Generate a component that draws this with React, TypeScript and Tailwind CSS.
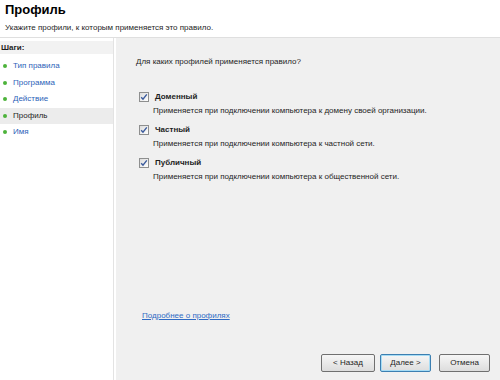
import React from 'react'

const steps = [
  { label: 'Тип правила', current: false },
  { label: 'Программа', current: false },
  { label: 'Действие', current: false },
  { label: 'Профиль', current: true },
  { label: 'Имя', current: false },
]

const profiles = [
  { name: 'Доменный', desc: 'Применяется при подключении компьютера к домену своей организации.' },
  { name: 'Частный', desc: 'Применяется при подключении компьютера к частной сети.' },
  { name: 'Публичный', desc: 'Применяется при подключении компьютера к общественной сети.' },
]

function Check() {
  return (
    <span className="w-[10px] h-[10px] border border-[#8e8f8f] bg-gradient-to-br from-[#dcdcdc] to-white flex items-center justify-center">
      <svg width="8" height="8" viewBox="0 0 8 8">
        <path d="M1.2 4.2 L3 6.2 L6.8 1.4" fill="none" stroke="#3a5a9c" strokeWidth="1.4" />
      </svg>
    </span>
  )
}

function Button({ label, focused, wide }: { label: string; focused?: boolean; wide?: boolean }) {
  return (
    <button
      className={`h-[18px] ${wide ? 'w-[54px]' : 'w-[51px]'} rounded-[2px] text-[8px] text-[#1e1e1e] bg-gradient-to-b from-[#f6f6f6] to-[#dddddd] border ${
        focused ? 'border-[#3c7fb1] shadow-[inset_0_0_0_1px_#a6dcf5]' : 'border-[#707070]'
      }`}
    >
      {label}
    </button>
  )
}

export default function App() {
  return (
    <div
      className="w-[500px] h-[380px] bg-white flex flex-col text-[#1e1e1e] overflow-hidden"
      style={{ fontFamily: '"Liberation Sans", Arial, sans-serif' }}
    >
      <div className="h-[38px] px-[5px] pt-[2px] border-b border-[#dfdfdf]">
        <div className="text-[13px] font-bold leading-[16px] text-black">Профиль</div>
        <div className="text-[8px] leading-[12px] mt-[4px]">Укажите профили, к которым применяется это правило.</div>
      </div>
      <div className="flex flex-1">
        <div className="w-[114px] bg-white border-r border-[#e3e3e3] pt-[3px]">
          <div className="h-[13px] bg-[#f2f2f2] pl-[1px] text-[8px] font-bold leading-[13px]">Шаги:</div>
          <div className="mt-[4px]">
            {steps.map((s) => (
              <div
                key={s.label}
                className={`h-[16.5px] flex items-center gap-[6px] pl-[3px] text-[8px] ${
                  s.current ? 'bg-[#ececec] text-[#1e1e1e]' : 'text-[#2c62b8]'
                }`}
              >
                <span className="w-[4px] h-[4px] rounded-full bg-[#4cb33a]" />
                {s.label}
              </div>
            ))}
          </div>
        </div>
        <div className="flex-1 border-l-2 border-white bg-[#f0f0f0] flex flex-col pl-[20px] pr-[10px] pb-[8px]">
          <div className="text-[8px] mt-[18px]">Для каких профилей применяется правило?</div>
          <div className="mt-[23px] flex flex-col gap-[7px]">
            {profiles.map((p) => (
              <div key={p.name}>
                <div className="flex items-center gap-[6px] pl-[3px]">
                  <Check />
                  <span className="text-[8px] font-bold leading-[12px]">{p.name}</span>
                </div>
                <div className="text-[8px] leading-[12px] pl-[17px] mt-[2px]">{p.desc}</div>
              </div>
            ))}
          </div>
          <div className="flex-1" />
          <div className="pl-[6px] text-[8px] text-[#2f6bc4] underline">Подробнее о профилях</div>
          <div className="h-[32px]" />
          <div className="flex justify-end">
            <Button label="< Назад" wide />
            <div className="w-[5px]" />
            <Button label="Далее >" focused />
            <div className="w-[8px]" />
            <Button label="Отмена" />
          </div>
        </div>
      </div>
    </div>
  )
}
